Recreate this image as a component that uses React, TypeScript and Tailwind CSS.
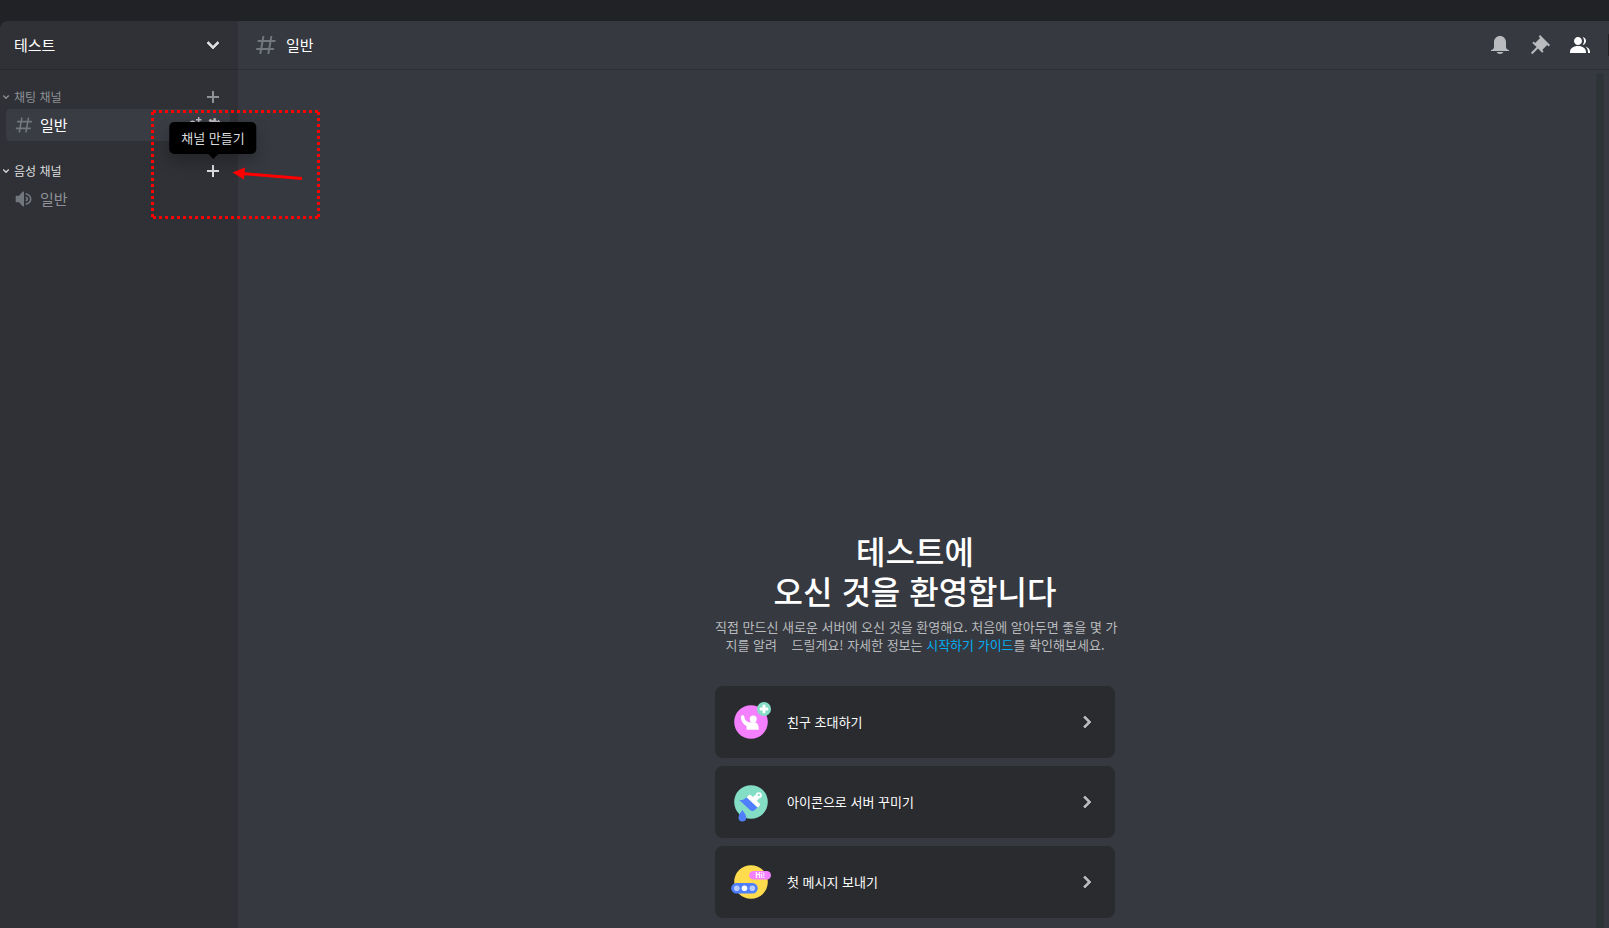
import type { ReactNode } from "react";

interface IconProps {
  className?: string;
}

const HashIcon = ({ className }: IconProps) => (
  <svg aria-hidden="true" className={className} viewBox="0 0 24 24" fill="currentColor">
    <path
      fillRule="evenodd"
      clipRule="evenodd"
      d="M5.88657 21C5.57547 21 5.3399 20.7189 5.39427 20.4126L6.00001 17H2.59511C2.28449 17 2.04905 16.7198 2.10259 16.4138L2.27759 15.4138C2.31946 15.1746 2.52722 15 2.77011 15H6.35001L7.41001 9H4.00511C3.69449 9 3.45905 8.71977 3.51259 8.41381L3.68759 7.41381C3.72946 7.17456 3.93722 7 4.18011 7H7.76001L8.39677 3.41262C8.43914 3.17391 8.64664 3 8.88907 3H9.87344C10.1845 3 10.4201 3.28107 10.3657 3.58738L9.76001 7H15.76L16.3968 3.41262C16.4391 3.17391 16.6466 3 16.8891 3H17.8734C18.1845 3 18.4201 3.28107 18.3657 3.58738L17.76 7H21.1649C21.4755 7 21.711 7.28023 21.6574 7.58619L21.4824 8.58619C21.4406 8.82544 21.2328 9 20.9899 9H17.41L16.35 15H19.7549C20.0655 15 20.301 15.2802 20.2474 15.5862L20.0724 16.5862C20.0306 16.8254 19.8228 17 19.5799 17H16L15.3632 20.5874C15.3209 20.8261 15.1134 21 14.8709 21H13.8866C13.5755 21 13.3399 20.7189 13.3943 20.4126L14 17H8.00001L7.36325 20.5874C7.32088 20.8261 7.11337 21 6.87094 21H5.88657ZM9.41045 9L8.35045 15H14.3504L15.4104 9H9.41045Z"
    />
  </svg>
);

const SpeakerIcon = ({ className }: IconProps) => (
  <svg aria-hidden="true" className={className} viewBox="0 0 24 24" fill="currentColor">
    <path
      fillRule="evenodd"
      clipRule="evenodd"
      d="M11.383 3.07904C11.009 2.92504 10.579 3.01004 10.293 3.29604L6 8.00204H3C2.45 8.00204 2 8.45304 2 9.00204V15.002C2 15.552 2.45 16.002 3 16.002H6L10.293 20.71C10.579 20.996 11.009 21.082 11.383 20.927C11.757 20.772 12 20.407 12 20.002V4.00204C12 3.59904 11.757 3.23204 11.383 3.07904ZM14 5.00195V7.00195C16.757 7.00195 19 9.24595 19 12.002C19 14.759 16.757 17.002 14 17.002V19.002C17.86 19.002 21 15.863 21 12.002C21 8.14295 17.86 5.00195 14 5.00195ZM14 9.00195C15.654 9.00195 17 10.349 17 12.002C17 13.657 15.654 15.002 14 15.002V13.002C14.551 13.002 15 12.553 15 12.002C15 11.451 14.551 11.002 14 11.002V9.00195Z"
    />
  </svg>
);

const ChevronIcon = ({ className }: IconProps) => (
  <svg aria-hidden="true" className={className} viewBox="0 0 24 24" fill="currentColor">
    <path
      d="M16.59 8.59L12 13.17L7.41 8.59L6 10L12 16L18 10L16.59 8.59Z"
      stroke="currentColor"
      strokeWidth="0.8"
    />
  </svg>
);

const PlusIcon = ({ className }: IconProps) => (
  <svg aria-hidden="true" className={className} viewBox="0 0 18 18" fill="currentColor">
    <path d="M15 8H10V3H8V8H3V10H8V15H10V10H15V8Z" />
  </svg>
);

const BellIcon = ({ className }: IconProps) => (
  <svg aria-hidden="true" className={className} viewBox="0 0 24 24" fill="currentColor">
    <path d="M18 9V14C18 15.657 19.344 17 21 17V18H3V17C4.656 17 6 15.657 6 14V9C6 5.686 8.686 3 12 3C15.314 3 18 5.686 18 9ZM12 21C10.524 21 9.248 20.1 8.555 19H15.445C14.752 20.1 13.476 21 12 21Z" />
  </svg>
);

const PinIcon = ({ className }: IconProps) => (
  <svg aria-hidden="true" className={className} viewBox="0 0 24 24" fill="currentColor">
    <path d="M22 12L12.101 2.101L10.686 3.514L12.101 4.929L7.151 9.878L5.736 8.465L4.322 9.88L8.565 14.122L2.908 19.778L4.322 21.192L9.979 15.536L14.222 19.778L15.636 18.364L14.222 16.95L19.171 12L20.586 13.414L22 12Z" />
  </svg>
);

const MembersIcon = ({ className }: IconProps) => (
  <svg aria-hidden="true" className={className} viewBox="0 0 24 24" fill="currentColor">
    <path d="M14 8.006C14 10.211 12.206 12.006 10 12.006C7.795 12.006 6 10.211 6 8.006C6 5.801 7.794 4.006 10 4.006C12.206 4.006 14 5.801 14 8.006ZM2 19.006C2 15.473 5.29 13.006 10 13.006C14.711 13.006 18 15.473 18 19.006V20.006H2V19.006Z" />
    <path d="M20 20.006H22V19.006C22 16.443 20.27 14.442 17.521 13.535C19.062 14.913 20 16.806 20 19.006V20.006Z" />
    <path d="M14.883 11.908C16.666 11.504 18 9.908 18 8.006C18 5.969 16.469 4.282 14.497 4.037C15.432 5.095 16 6.485 16 8.006C16 9.449 15.489 10.774 14.638 11.81C14.72 11.842 14.802 11.874 14.883 11.908Z" />
  </svg>
);

const InviteIcon = ({ className }: IconProps) => (
  <svg aria-hidden="true" className={className} viewBox="0 0 16 16" fill="currentColor">
    <path d="M11.4 2V0H10V2H8V3.4H10V5.4H11.4V3.4H13.4V2Z" />
    <circle cx="4.6" cy="6.2" r="2.8" />
    <path d="M0.2 14.5C0.2 12 2 10.2 4.6 10.2S10.2 12 10.2 14.5Z" />
  </svg>
);

const GearIcon = ({ className }: IconProps) => (
  <svg aria-hidden="true" className={className} viewBox="0 0 16 16" fill="none">
    <circle cx="8" cy="8" r="3.7" stroke="currentColor" strokeWidth="3" />
    <circle
      cx="8"
      cy="8"
      r="5.8"
      stroke="currentColor"
      strokeWidth="2.4"
      strokeDasharray="2.5 2.05"
      strokeDashoffset="1.2"
    />
  </svg>
);

const InviteBadge = () => (
  <svg aria-hidden="true" className="size-10" viewBox="0 0 40 40">
    <circle cx="20" cy="20" r="16.8" fill="#f47fff" />
    <circle cx="22.2" cy="17" r="3.5" fill="#fff" />
    <path
      d="M9.9 15.2C9.7 13 13 12.6 13.3 14.8C13.7 17.4 15 19.4 17.6 20.2H24.2C26.6 20.8 27.8 23.4 27.8 27.7H15.6V24.2C12 22.4 10.2 19 9.9 15.2Z"
      fill="#fff"
    />
    <circle cx="33" cy="7" r="7" fill="#84ddc5" />
    <path d="M31.6 2.8H34.4V5.6H37.2V8.4H34.4V11.2H31.6V8.4H28.8V5.6H31.6Z" fill="#fff" />
  </svg>
);

const BrushBadge = () => (
  <svg aria-hidden="true" className="size-10" viewBox="0 0 40 40">
    <circle cx="20" cy="20" r="16.8" fill="#84ddc5" />
    <path d="M8 17.8C10.6 18.6 13 17.6 15.6 15.2L26.6 25.4L23.4 28.2C22 29.4 20.4 29.2 19 28Z" fill="#4f7fff" />
    <path
      d="M15.6 15.2L17.8 13.2C18.6 12.6 19.4 12.7 20 13.3L21.8 15L25.6 12L28.9 15.4L25.8 19L28.6 21.6C29.3 22.3 29.3 23 28.6 23.7L26.6 25.4Z"
      fill="#fff"
    />
    <circle cx="27.8" cy="13.2" r="2.1" fill="#84ddc5" stroke="#fff" strokeWidth="1.9" />
    <path d="M11.4 28C13.2 30.6 15.3 33 15.3 35.5A3.9 3.9 0 0 1 7.5 35.5C7.5 33 9.6 30.6 11.4 28Z" fill="#4f7fff" />
  </svg>
);

const MessageBadge = () => (
  <svg aria-hidden="true" className="size-10 overflow-visible" viewBox="0 0 40 40">
    <circle cx="20" cy="20" r="16.8" fill="#ffdc4d" />
    <rect x="18.2" y="9" width="21.8" height="8.6" rx="4.3" fill="#f47fff" />
    <text x="29.2" y="15.7" textAnchor="middle" fontSize="7" fontWeight="700" fill="#fff">
      Hi!
    </text>
    <rect x="0.2" y="21" width="26.5" height="10.4" rx="5.2" fill="#4f7fff" />
    <circle cx="5.8" cy="26.2" r="2.8" fill="#b8ccff" />
    <circle cx="13.5" cy="26.2" r="2.8" fill="#fff" />
    <circle cx="21.3" cy="26.2" r="2.8" fill="#b8ccff" />
  </svg>
);

interface CategoryProps {
  name: string;
  active?: boolean;
  tooltip?: string;
  children: ReactNode;
}

const Category = ({ name, active, tooltip, children }: CategoryProps) => (
  <section>
    <div
      className={
        active
          ? "flex h-[18px] items-center justify-between pr-4 text-[#dcddde]"
          : "flex h-[18px] items-center justify-between pr-4 text-[#8e9297]"
      }
    >
      <button className="flex items-center gap-0.5 text-xs leading-4">
        <ChevronIcon className="size-3" />
        <span>{name}</span>
      </button>
      <div className="relative flex">
        <button aria-label={`${name} 추가`}>
          <PlusIcon className="size-[18px]" />
        </button>
        {tooltip && (
          <div
            role="tooltip"
            className="absolute bottom-full left-1/2 z-10 mb-2 -translate-x-1/2 rounded-[5px] bg-black px-3 py-1.5 text-[13px] leading-5 whitespace-nowrap text-[#dcddde] shadow-[0_8px_16px_rgba(0,0,0,0.24)]"
          >
            {tooltip}
            <div className="absolute top-full left-1/2 -translate-x-1/2 border-5 border-b-0 border-transparent border-t-black" />
          </div>
        )}
      </div>
    </div>
    <ul className="mt-[3px] pr-2 pl-1.5">{children}</ul>
  </section>
);

const Sidebar = () => (
  <aside className="flex w-[238px] shrink-0 flex-col rounded-tl-lg bg-[#2f3136]">
    <header className="flex h-[49px] items-center justify-between border-b border-[#27292d] pr-[13px] pl-3.5 text-white">
      <h2 className="text-[15px] leading-5">테스트</h2>
      <button aria-label="서버 메뉴" className="text-[#dcddde]">
        <ChevronIcon className="size-6" />
      </button>
    </header>
    <nav className="flex flex-col gap-[21px] pt-[18px]">
      <Category name="채팅 채널">
        <li className="flex h-8 items-center justify-between rounded bg-[#393c43] px-2">
          <a href="#general" className="flex items-center gap-1.5 text-[15px] leading-5 text-white">
            <HashIcon className="size-5 text-[#72767d]" />
            일반
          </a>
          <div className="flex gap-0.5 text-[#b9bbbe]">
            <button aria-label="초대 코드 만들기">
              <InviteIcon className="size-4" />
            </button>
            <button aria-label="채널 편집">
              <GearIcon className="size-4" />
            </button>
          </div>
        </li>
      </Category>
      <Category name="음성 채널" active tooltip="채널 만들기">
        <li className="flex h-8 items-center px-2">
          <a href="#voice" className="flex items-center gap-1.5 text-[15px] leading-5 text-[#8e9297]">
            <SpeakerIcon className="size-5 text-[#72767d]" />
            일반
          </a>
        </li>
      </Category>
    </nav>
  </aside>
);

const steps = [
  { label: "친구 초대하기", icon: <InviteBadge /> },
  { label: "아이콘으로 서버 꾸미기", icon: <BrushBadge /> },
  { label: "첫 메시지 보내기", icon: <MessageBadge /> },
];

const Welcome = () => (
  <div className="flex w-[400px] flex-col">
    <h1 className="text-center text-[32px] leading-10 font-medium text-white">
      테스트에
      <br />
      오신 것을 환영합니다
    </h1>
    <p className="mt-2 text-center text-[13px] leading-[18px] whitespace-nowrap text-[#b9bbbe]">
      직접 만드신 새로운 서버에 오신 것을 환영해요. 처음에 알아두면 좋을 몇 가
      <br />
      지를 알려&nbsp;&nbsp; &nbsp;드릴게요! 자세한 정보는{" "}
      <a href="#guide" className="text-[#00aff4]">
        시작하기 가이드
      </a>
      를 확인해보세요.
    </p>
    <div className="mt-8 flex flex-col gap-2">
      {steps.map((step) => (
        <button
          key={step.label}
          className="flex h-[72px] items-center gap-4 rounded-lg bg-[#292b2f] px-4 text-left text-[13px] leading-5 text-white"
        >
          {step.icon}
          <span className="grow">{step.label}</span>
          <ChevronIcon className="size-6 -rotate-90 text-[#b9bbbe]" />
        </button>
      ))}
    </div>
  </div>
);

const ChatArea = () => (
  <main className="flex min-w-0 grow flex-col bg-[#36393f]">
    <header className="flex h-[49px] items-center justify-between border-b border-[#2d2f34] pl-4">
      <div className="flex items-center gap-2">
        <HashIcon className="size-6 text-[#72767d]" />
        <h3 className="text-[15px] leading-5 text-white">일반</h3>
      </div>
      <div className="flex items-center gap-4 text-[#b9bbbe]">
        <button aria-label="알림 설정">
          <BellIcon className="size-6" />
        </button>
        <button aria-label="고정된 메시지">
          <PinIcon className="size-6" />
        </button>
        <button aria-label="멤버 목록" className="text-white">
          <MembersIcon className="size-6" />
        </button>
        <div className="h-[22px] w-px bg-[#202225]" />
      </div>
    </header>
    <div className="flex grow">
      <div className="flex grow flex-col items-center justify-end pb-2.5">
        <Welcome />
      </div>
      <div className="mx-1 mt-[3px] w-2 rounded-t bg-[#2e3338]" />
      <div className="w-px" />
    </div>
  </main>
);

// Red guide marks that point at the "create channel" button
const Annotation = () => (
  <svg
    aria-hidden="true"
    className="pointer-events-none absolute top-[110px] left-[151px] z-20 h-[109px] w-[169px]"
    viewBox="0 0 169 109"
    fill="none"
  >
    <path d="M2 1.5H169M2 107.5H169" stroke="#f00" strokeWidth="3" strokeDasharray="3 3" />
    <path d="M1.5 2V109M167.5 2V109" stroke="#f00" strokeWidth="3" strokeDasharray="3 3" />
    <path d="M91 63.5L151 68.5" stroke="#f00" strokeWidth="3" />
    <path d="M81.5 62.5L94 57.5L93 69.5Z" fill="#f00" />
  </svg>
);

const App = () => {
  return (
    <div
      lang="ko"
      className="relative flex min-h-screen flex-col bg-[#202225] pt-[21px] font-['Noto_Sans_CJK_KR',sans-serif]"
    >
      <div className="flex grow">
        <Sidebar />
        <ChatArea />
      </div>
      <Annotation />
    </div>
  );
};

export default App;
